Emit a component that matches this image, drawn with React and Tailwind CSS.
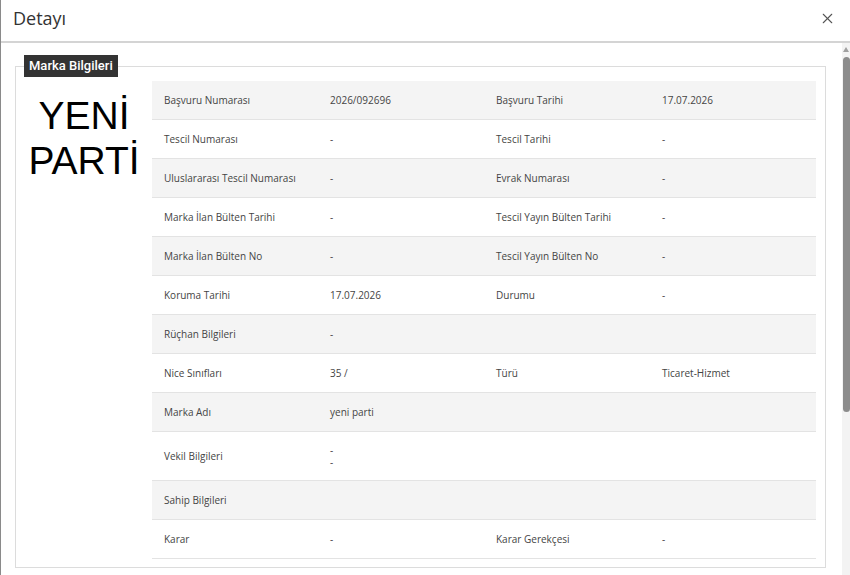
import React from "react";
import { X } from "lucide-react";

const ROWS = [
  ["Başvuru Numarası", "2026/092696", "Başvuru Tarihi", "17.07.2026"],
  ["Tescil Numarası", "-", "Tescil Tarihi", "-"],
  ["Uluslararası Tescil Numarası", "-", "Evrak Numarası", "-"],
  ["Marka İlan Bülten Tarihi", "-", "Tescil Yayın Bülten Tarihi", "-"],
  ["Marka İlan Bülten No", "-", "Tescil Yayın Bülten No", "-"],
  ["Koruma Tarihi", "17.07.2026", "Durumu", "-"],
  ["Rüçhan Bilgileri", "-", "", ""],
  ["Nice Sınıfları", "35 /", "Türü", "Ticaret-Hizmet"],
  ["Marka Adı", "yeni parti", "", ""],
  ["Vekil Bilgileri", ["-", "-"], "", ""],
  ["Sahip Bilgileri", "", "", ""],
  ["Karar", "-", "Karar Gerekçesi", "-"],
];

const cellClass = "pl-[12px] flex flex-col justify-center";

function InfoRow({ row, index }) {
  const [l1, v1, l2, v2] = row;
  const multi = Array.isArray(v1);
  return (
    <div
      className={`grid grid-cols-4 border-b border-[#e3e3e3] ${multi ? "h-[49px]" : "h-[39px]"} ${
        index % 2 === 0 ? "bg-[#f4f4f4]" : "bg-white"
      }`}
    >
      <div className={cellClass}>{l1}</div>
      <div className={cellClass}>
        {multi ? (
          <span className="leading-[12px]">
            {v1[0]}
            <br />
            {v1[1]}
          </span>
        ) : (
          v1
        )}
      </div>
      <div className={cellClass}>{l2}</div>
      <div className={cellClass}>{v2}</div>
    </div>
  );
}

export default function App() {
  return (
    <div className="w-[850px] h-[575px] bg-white border-l border-[#8a8a8a] flex flex-col overflow-hidden">
      <div className="h-[43px] shrink-0 flex items-center justify-between pl-[12px] pr-[14px] border-b-2 border-[#d4d4d4]">
        <h2 className="text-[18px] text-[#333] font-['Open_Sans',sans-serif] -mt-[4px]">Detayı</h2>
        <button className="text-[#555] -mt-[4px]" aria-label="Kapat">
          <X size={17} strokeWidth={1.5} />
        </button>
      </div>

      <div className="flex-1 flex min-h-0">
        <div className="flex-1 overflow-hidden pl-[14px]">
          <div className="pr-[16px] pt-[12px] pb-[240px]">
            <fieldset className="border border-[#dcdcdc] pb-[8px]">
              <legend className="ml-[8px] h-[22px] px-[5px] bg-[#333] text-white text-[13px] font-medium leading-[22px] font-['Roboto',sans-serif]">
                Marka Bilgileri
              </legend>
              <div className="flex mt-[4px]">
                <div className="w-[136px] shrink-0 pt-[12px] text-center text-[39px] leading-[45px] text-black font-['Liberation_Sans',Arial,sans-serif]">
                  <div>YENİ</div>
                  <div>PARTİ</div>
                </div>
                <div className="flex-1 mr-[9px] text-[10px] text-[#444] font-['Open_Sans',sans-serif]">
                  {ROWS.map((row, i) => (
                    <InfoRow key={i} row={row} index={i} />
                  ))}
                </div>
              </div>
            </fieldset>
          </div>
        </div>

        <div className="w-[8px] shrink-0 bg-[#f3f3f3] flex flex-col items-center pt-[4px]">
          <div className="w-0 h-0 border-l-[3px] border-r-[3px] border-b-[5px] border-l-transparent border-r-transparent border-b-[#a0a0a0]" />
          <div className="mt-[5px] w-[7px] h-[355px] rounded-[4px] bg-[#8c8c8c]" />
        </div>
      </div>
    </div>
  );
}
